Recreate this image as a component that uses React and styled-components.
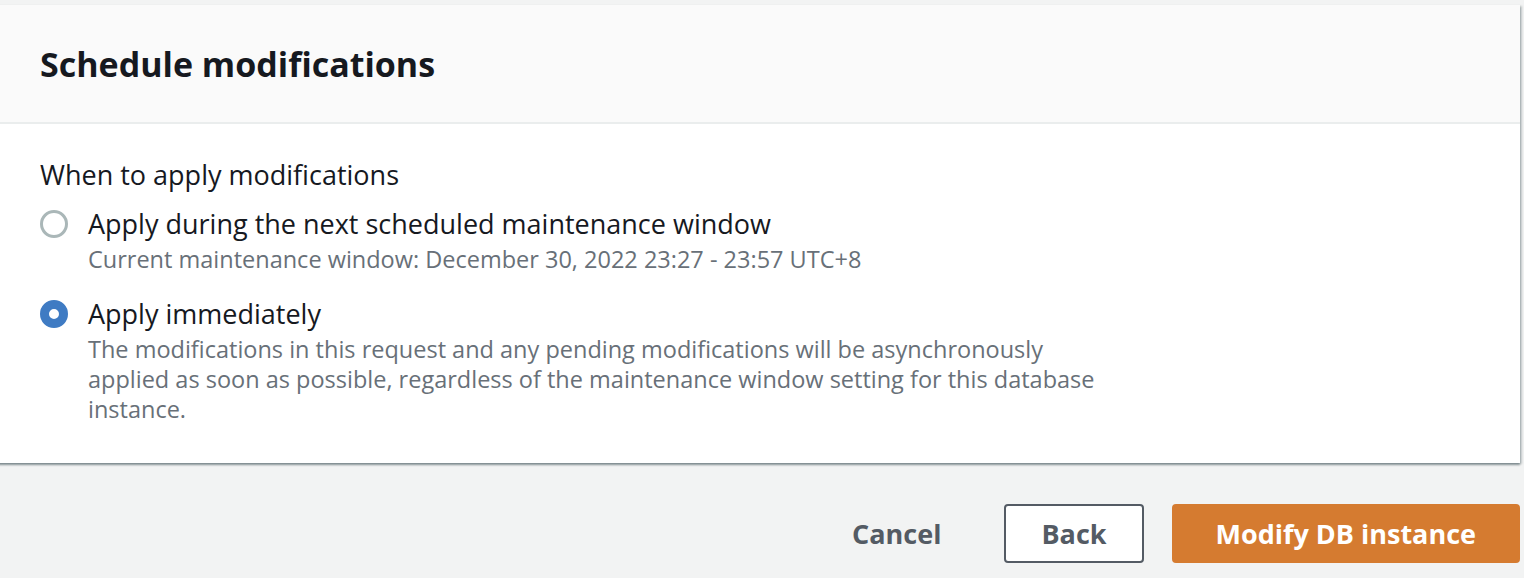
import React from "react";
import styled, { createGlobalStyle } from "styled-components";

const GlobalStyle = createGlobalStyle`
  body {
    margin: 0;
    background: #f2f3f3;
    font-family: "Open Sans", "Noto Sans", sans-serif;
    color: #16191f;
  }
`;

const Page = styled.div`
  padding: 5px 4px 0 0;
  overflow: hidden;
`;

const Panel = styled.section`
  margin-left: -4px;
  background: #fff;
  box-shadow: 0 2px 2px rgba(0, 28, 36, 0.4), 2px 1px 2px rgba(0, 28, 36, 0.18);
`;

const PanelHeader = styled.header`
  height: 117px;
  display: flex;
  align-items: center;
  padding: 0 44px;
  background: #fafafa;
  border-bottom: 2px solid #eaeded;
`;

const Title = styled.h2`
  margin: 0;
  font-size: 34px;
  font-weight: 700;
`;

const PanelBody = styled.div`
  padding: 31px 44px 39px;
`;

const Legend = styled.div`
  font-size: 27px;
  line-height: 40px;
  margin-bottom: 9px;
`;

const Option = styled.label`
  display: grid;
  grid-template-columns: 28px 1fr;
  column-gap: 20px;
  & + & {
    margin-top: 20px;
  }
`;

const Radio = styled.span`
  box-sizing: border-box;
  width: 28px;
  height: 28px;
  margin-top: 6px;
  border-radius: 50%;
  background: #fff;
  border: ${(p) => (p.$checked ? "9px solid #3f7bc3" : "3px solid #aab7b8")};
`;

const OptionText = styled.div`
  display: flex;
  flex-direction: column;
`;

const OptionLabel = styled.span`
  font-size: 27px;
  line-height: 40px;
`;

const OptionDesc = styled.span`
  font-size: 23.5px;
  line-height: 30px;
  color: #687078;
  max-width: 1020px;
`;

const Actions = styled.div`
  display: flex;
  justify-content: flex-end;
  align-items: center;
  gap: 24px;
  margin-top: 41px;
`;

const variants = {
  link: "background: transparent; color: #545b64; border-color: transparent; padding: 0 37px;",
  normal: "background: #fff; color: #545b64; border-color: #545b64; padding: 0 35px;",
  primary:
    "background: #d57b30; color: #fff; border-color: #d57b30; padding: 0 42px; margin-left: 4px;",
};

const Button = styled.button`
  height: 59px;
  border: 2px solid;
  border-radius: 4px;
  font-family: inherit;
  font-size: 27px;
  font-weight: 700;
  cursor: pointer;
  ${(p) => variants[p.$variant]}
`;

const options = [
  {
    label: "Apply during the next scheduled maintenance window",
    desc: "Current maintenance window: December 30, 2022 23:27 - 23:57 UTC+8",
    checked: false,
  },
  {
    label: "Apply immediately",
    desc: "The modifications in this request and any pending modifications will be asynchronously applied as soon as possible, regardless of the maintenance window setting for this database instance.",
    checked: true,
  },
];

export default function App() {
  return (
    <Page>
      <GlobalStyle />
      <Panel>
        <PanelHeader>
          <Title>Schedule modifications</Title>
        </PanelHeader>
        <PanelBody>
          <Legend>When to apply modifications</Legend>
          {options.map((o) => (
            <Option key={o.label}>
              <Radio $checked={o.checked} />
              <OptionText>
                <OptionLabel>{o.label}</OptionLabel>
                <OptionDesc>{o.desc}</OptionDesc>
              </OptionText>
            </Option>
          ))}
        </PanelBody>
      </Panel>
      <Actions>
        <Button $variant="link">Cancel</Button>
        <Button $variant="normal">Back</Button>
        <Button $variant="primary">Modify DB instance</Button>
      </Actions>
    </Page>
  );
}
